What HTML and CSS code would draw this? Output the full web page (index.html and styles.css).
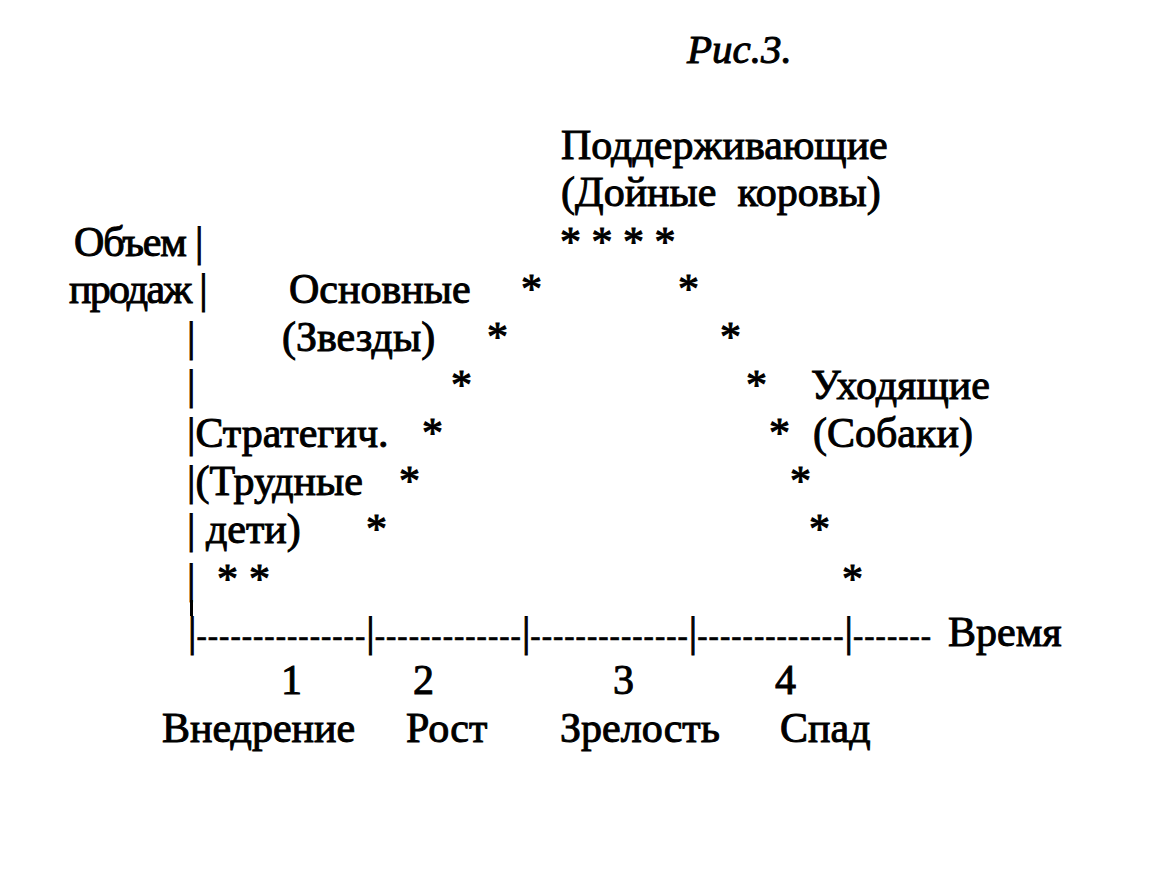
FILE: index.html
```html
<!DOCTYPE html>
<html>
<head>
<meta charset="utf-8">
<title>Fig 3</title>
<link rel="stylesheet" href="styles.css">
</head>
<body>
<div class="canvas">
  <p class="t ris">Рис.3.</p>

  <p class="t r0 x-podd">Поддерживающие</p>
  <p class="t r1 x-podd">(Дойные&nbsp; коровы)</p>
  <p class="t r2 x-4stars">* * * *</p>

  <p class="t r2 x-obem">Объем |</p>
  <p class="t r3 x-prod">продаж |</p>
  <p class="t r3 x-osn">Основные</p>
  <p class="t r3 s3a">*</p>
  <p class="t r3 s3b">*</p>

  <p class="t r4 x-bar">|</p>
  <p class="t r4 x-zv">(Звезды)</p>
  <p class="t r4 s4a">*</p>
  <p class="t r4 s4b">*</p>

  <p class="t r5 x-bar">|</p>
  <p class="t r5 s5a">*</p>
  <p class="t r5 s5b">*</p>
  <p class="t r5 x-uh">Уходящие</p>

  <p class="t r6 x-bar">|Стратегич.</p>
  <p class="t r6 s6a">*</p>
  <p class="t r6 s6b">*</p>
  <p class="t r6 x-sob">(Собаки)</p>

  <p class="t r7 x-bar">|(Трудные</p>
  <p class="t r7 s7a">*</p>
  <p class="t r7 s7b">*</p>

  <p class="t r8 x-bar">|&nbsp;дети)</p>
  <p class="t r8 s8a">*</p>
  <p class="t r8 s8b">*</p>

  <p class="t r9 x-bar">|</p>
  <p class="t r9 s9a">*</p>
  <p class="t r9 s9b">*</p>
  <p class="t r9 s9c">*</p>

  <div class="vseg"></div>

  <div class="t rax axis"><span class="tick">|</span><span class="seg">---------------</span><span class="tick">|</span><span class="seg">-------------</span><span class="tick">|</span><span class="seg">--------------</span><span class="tick">|</span><span class="seg">-------------</span><span class="tick">|</span><span class="seg">-------</span></div>
  <p class="t rax x-vr">Время</p>

  <p class="t rn n1">1</p>
  <p class="t rn n2">2</p>
  <p class="t rn n3">3</p>
  <p class="t rn n4">4</p>

  <p class="t rl l1">Внедрение</p>
  <p class="t rl l2">Рост</p>
  <p class="t rl l3">Зрелость</p>
  <p class="t rl l4">Спад</p>
</div>
</body>
</html>
```

FILE: styles.css
```css
html, body {
  margin: 0;
  padding: 0;
  background: #fff;
  font-family: "Liberation Serif", serif;
}

.canvas {
  position: relative;
  width: 1171px;
  height: 873px;
  overflow: hidden;
  background: #fff;
  color: #000;
}

.t {
  position: absolute;
  margin: 0;
  font: 42px/48px "Liberation Serif", serif;
  white-space: nowrap;
  -webkit-text-stroke: 1px #000;
}

.ris {
  left: 687px;
  top: 25px;
  font-size: 41px;
  font-style: italic;
}

/* rows: top of the 48px line box, baseline is about 38px lower */
.r0 { top: 121px; }
.r1 { top: 168px; }
.r2 { top: 218px; }
.r3 { top: 265px; }
.r4 { top: 313px; }
.r5 { top: 361px; }
.r6 { top: 409px; }
.r7 { top: 457px; }
.r8 { top: 505px; }
.r9 { top: 555px; }
.rax { top: 608px; }
.rn { top: 656px; }
.rl { top: 704px; }

/* horizontal positions */
.x-podd { left: 561px; }
.x-4stars { left: 560px; }
.x-obem { left: 74px; letter-spacing: -1.2px; }
.x-prod { left: 69px; letter-spacing: -1.8px; }
.x-osn { left: 289px; }
.x-bar { left: 187px; }
.x-zv { left: 282px; }
.x-uh { left: 811px; }
.x-sob { left: 813px; }
.x-vr { left: 948px; }

.s3a { left: 521px; }
.s3b { left: 678px; }
.s4a { left: 487px; }
.s4b { left: 720px; }
.s5a { left: 451px; }
.s5b { left: 746px; }
.s6a { left: 422px; }
.s6b { left: 769px; }
.s7a { left: 399px; }
.s7b { left: 790px; }
.s8a { left: 366px; }
.s8b { left: 809px; }
.s9a { left: 217px; }
.s9b { left: 249px; }
.s9c { left: 842px; }

.n1 { left: 281px; }
.n2 { left: 413px; }
.n3 { left: 613px; }
.n4 { left: 775px; }

.l1 { left: 162px; }
.l2 { left: 406px; }
.l3 { left: 560px; }
.l4 { left: 780px; }

/* short stroke joining the vertical axis to the time axis */
.vseg {
  position: absolute;
  left: 190px;
  top: 600px;
  width: 3px;
  height: 16px;
  background: #000;
}

/* time axis */
.axis {
  left: 188px;
}

.seg {
  font-size: 31px;
  letter-spacing: 1px;
  -webkit-text-stroke: 0.6px #000;
}
```
